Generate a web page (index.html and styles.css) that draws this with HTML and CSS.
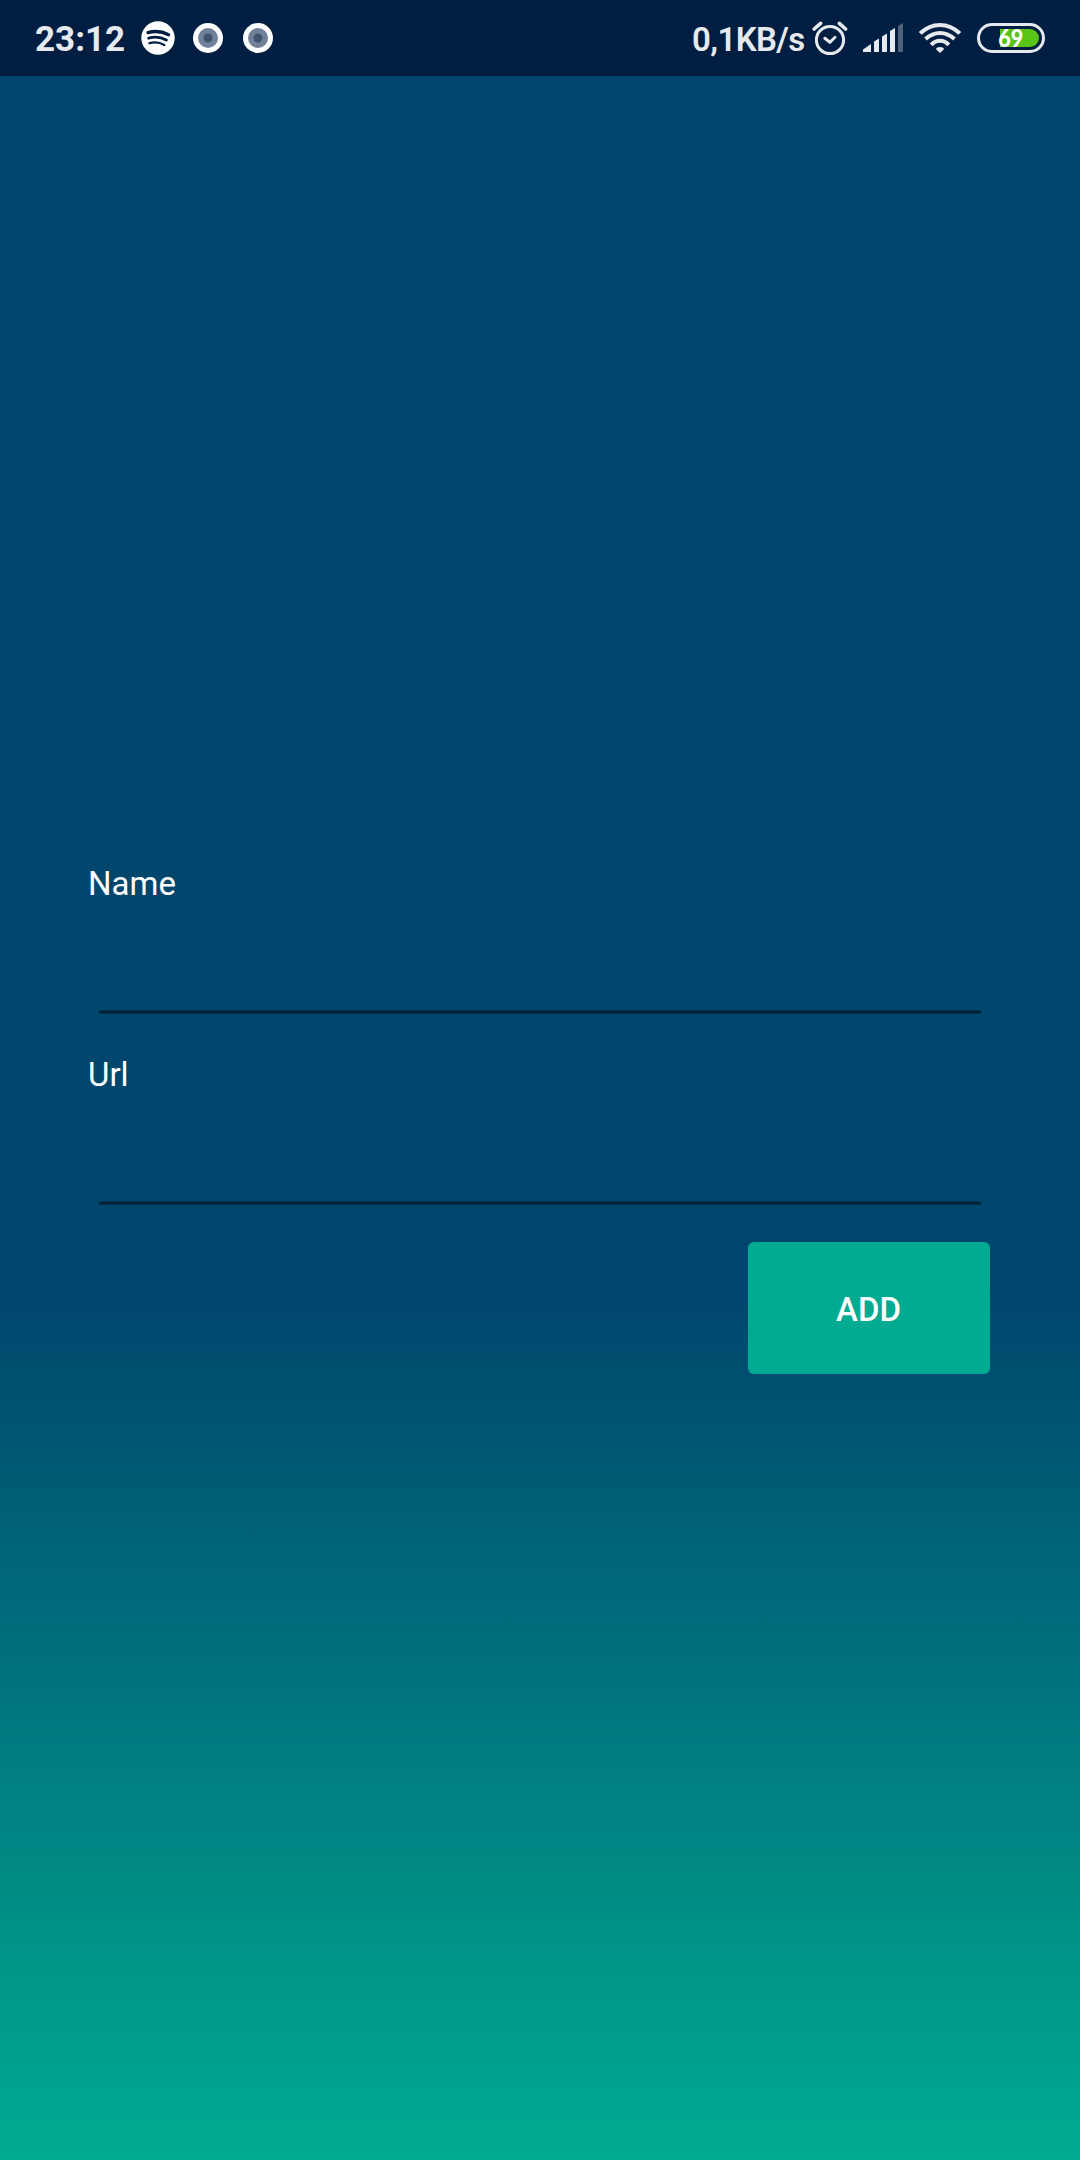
FILE: index.html
```html
<!DOCTYPE html>
<html lang="en">
<head>
<meta charset="utf-8">
<title>Add</title>
<link rel="stylesheet" href="styles.css">
</head>
<body>
<div class="screen">
  <header class="status">
    <span class="clock">23:12</span>
    <svg class="notifications" width="140" height="36" viewBox="0 0 140 36">
      <circle cx="18" cy="18" r="16.7" fill="#fff"/>
      <g fill="none" stroke="#001e41" stroke-linecap="round">
        <path d="M8 12.6Q19 9.6 28.6 14.7" stroke-width="3.3"/>
        <path d="M8.6 18.2Q18 15.5 26.4 20.1" stroke-width="2.8"/>
        <path d="M9.5 23.1Q17.5 21 24.3 25" stroke-width="2.3"/>
      </g>
      <circle cx="68" cy="18" r="15" fill="#fff"/>
      <circle cx="68" cy="18" r="10" fill="#71819a"/>
      <circle cx="68" cy="18" r="4.5" fill="#40546f"/>
      <circle cx="118" cy="18" r="15" fill="#fff"/>
      <circle cx="118" cy="18" r="10" fill="#71819a"/>
      <circle cx="118" cy="18" r="4.5" fill="#40546f"/>
    </svg>
    <span class="speed">0,1KB/s</span>
    <svg class="alarm" width="36" height="36" viewBox="0 0 36 36" fill="none" stroke="#e6e9ed" stroke-width="3" stroke-linecap="round">
      <circle cx="18" cy="20" r="13.6"/>
      <path d="M12.8 18.3L18 22.3L23 17.3" stroke-linejoin="round"/>
      <path d="M2.2 9L8.6 3.3M33.6 9L27.4 3.3" stroke-width="3.6"/>
    </svg>
    <svg class="signal" width="40" height="30" viewBox="0 0 40 30" fill="#e6e9ed">
      <path d="M0 29V26.5L8 21V29Z"/>
      <path d="M11 29V18.5L16 15.5V29Z"/>
      <path d="M19 29V13.5L24 10.5V29Z"/>
      <path d="M27 29V8L32 5V29Z"/>
      <path d="M35 29V3L40 0V29Z" fill="#4f627b"/>
    </svg>
    <svg class="wifi" width="42" height="30" viewBox="0 0 42 30" fill="none" stroke="#e6e9ed" stroke-width="4">
      <path d="M1.2 10.4Q10 2 21 2T40.8 10.4"/>
      <path d="M6.6 16Q13 9.9 21 9.9T35.4 16"/>
      <path d="M12.2 21.8Q16 17.8 21 17.8T29.8 21.8"/>
      <path d="M21 30L17 26.2Q17.4 24 21 24T25 26.2Z" fill="#e6e9ed" stroke="none"/>
    </svg>
    <svg class="battery" width="68" height="30" viewBox="0 0 68 30">
      <rect x="1.5" y="1.5" width="65" height="27" rx="13.5" fill="none" stroke="#e6e9ed" stroke-width="3"/>
      <path d="M23 6H53A9 9 0 0 1 53 24H23Z" fill="#58c416"/>
      <text class="level" x="33.7" y="24" text-anchor="middle" textLength="25" lengthAdjust="spacingAndGlyphs">69</text>
    </svg>
  </header>
  <main class="form">
    <label class="label" for="name">Name</label>
    <input class="field" id="name" type="text">
    <label class="label" for="url">Url</label>
    <input class="field" id="url" type="text">
    <button class="add" type="button">ADD</button>
  </main>
</div>
</body>
</html>
```
FILE: styles.css
```css
* {
  box-sizing: border-box;
}

body {
  margin: 0;
  font-family: Roboto, sans-serif;
  color: #fff;
}

.screen {
  width: 1080px;
  height: 2160px;
  display: flex;
  flex-direction: column;
  background: linear-gradient(#00466d 0, #00466d 1200px, #00456d 1290px, #00ab91 2155px);
}

.status {
  height: 76px;
  flex: none;
  display: flex;
  align-items: center;
  padding: 0 35px;
  background: #001e41;
  color: #e6e9ed;
}

.status svg {
  display: block;
  flex: none;
}

.clock {
  width: 105px;
  padding-top: 2px;
  font-size: 35px;
  font-weight: 700;
  white-space: nowrap;
}

.speed {
  margin-left: auto;
  width: 120px;
  padding-top: 2px;
  font-size: 33px;
  font-weight: 600;
  letter-spacing: -0.6px;
  white-space: nowrap;
}

.signal {
  margin-left: 15px;
}

.wifi {
  margin-left: 16px;
}

.battery {
  margin-left: 16px;
}

.level {
  font-family: Lato, sans-serif;
  font-size: 25px;
  font-weight: 900;
  fill: #fff;
}

.form {
  display: flex;
  flex-direction: column;
  padding: 788px 88px 0;
}

.label {
  height: 39px;
  font-size: 33px;
  line-height: 39px;
}

.field {
  height: 110px;
  margin: 0 11px 42px;
  padding: 0;
  border: 0;
  border-bottom: 2px solid #022237;
  box-shadow: 0 1px 0 #013351, inset 0 -1px 0 #013351;
  background: none;
  color: #fff;
  font: 33px Roboto, sans-serif;
  outline: none;
}

.add {
  align-self: flex-end;
  width: 242px;
  height: 132px;
  margin: -4px 2px 0 0;
  padding: 3px 1px 0 0;
  border: 0;
  border-radius: 6px;
  background: #00ab91;
  color: #fff;
  font: 500 33px Roboto, sans-serif;
}
```
